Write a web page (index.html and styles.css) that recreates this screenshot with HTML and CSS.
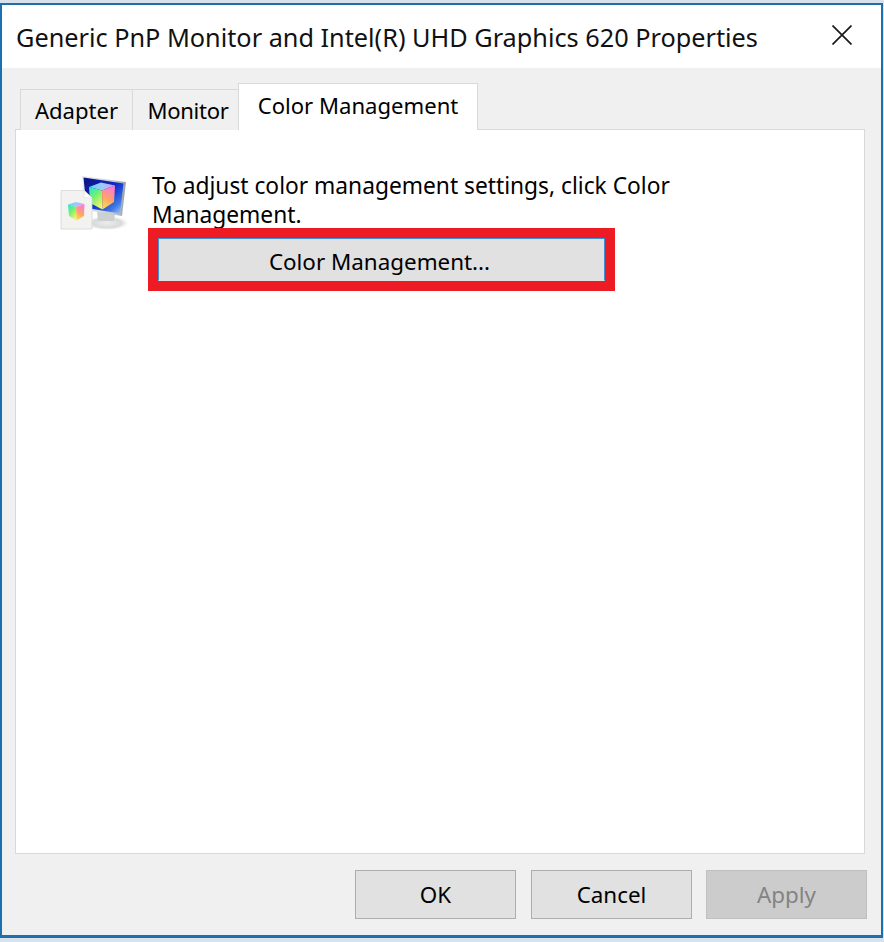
FILE: index.html
```html
<!DOCTYPE html>
<html lang="en">
<head>
<meta charset="utf-8">
<title>Properties</title>
<link rel="stylesheet" href="styles.css">
</head>
<body>
<div class="window">
  <header class="titlebar">
    <span class="title">Generic PnP Monitor and Intel(R) UHD Graphics 620 Properties</span>
    <svg class="close" width="20" height="20" viewBox="0 0 20 20"><path d="M0.5 0.5 L19.5 19.5 M19.5 0.5 L0.5 19.5" stroke="#1a1a1a" stroke-width="1.7" fill="none"/></svg>
  </header>
  <main class="body">
    <div class="tabs">
      <div class="tab tab-first">Adapter</div>
      <div class="tab tab-second">Monitor</div>
      <div class="tab tab-active">Color Management</div>
    </div>
    <section class="panel">
      <svg class="icon" width="68" height="58" viewBox="0 0 68 58">
        <defs>
          <linearGradient id="screen" x1="0" y1="0" x2="1" y2="1">
            <stop offset="0" stop-color="#08127e"/>
            <stop offset="0.5" stop-color="#0a2cc8"/>
            <stop offset="0.8" stop-color="#3f78e6"/>
            <stop offset="1" stop-color="#b4d2f6"/>
          </linearGradient>
          <linearGradient id="bezel" x1="0" y1="0" x2="1" y2="0">
            <stop offset="0" stop-color="#e8ebf0"/>
            <stop offset="0.7" stop-color="#c4cad2"/>
            <stop offset="1" stop-color="#98a2ac"/>
          </linearGradient>
          <linearGradient id="left" x1="0.1" y1="0" x2="0.7" y2="1">
            <stop offset="0" stop-color="#2ce6d0"/>
            <stop offset="0.45" stop-color="#74f070"/>
            <stop offset="1" stop-color="#fdf468"/>
          </linearGradient>
          <linearGradient id="right" x1="0.6" y1="0" x2="0.3" y2="1">
            <stop offset="0" stop-color="#ff78d8"/>
            <stop offset="0.55" stop-color="#ffa468"/>
            <stop offset="1" stop-color="#fbdc50"/>
          </linearGradient>
          <linearGradient id="top" x1="0" y1="0" x2="1" y2="0">
            <stop offset="0" stop-color="#58d8f0"/>
            <stop offset="0.5" stop-color="#a0c8fa"/>
            <stop offset="1" stop-color="#d89cf0"/>
          </linearGradient>
          <radialGradient id="base" cx="0.5" cy="0.5" r="0.5">
            <stop offset="0" stop-color="#eceeee"/>
            <stop offset="0.7" stop-color="#d8dada"/>
            <stop offset="1" stop-color="#eeeeee" stop-opacity="0.2"/>
          </radialGradient>
          <filter id="soft" x="-5%" y="-5%" width="110%" height="110%"><feGaussianBlur stdDeviation="0.55"/></filter>
        </defs>
        <g filter="url(#soft)">
          <ellipse cx="47" cy="48" rx="21" ry="7" fill="url(#base)"/>
          <path d="M37 36 L55 39 L54 46 L38 46 Z" fill="#cdd0d0"/>
          <path d="M22 1 L66 7 L62 41 L25 35 Z" fill="url(#bezel)"/>
          <path d="M23.5 2.5 L63.5 8.5 L60 38.5 L26.5 33 Z" fill="url(#screen)"/>
          <path d="M29 12 L41 7.5 L55 10.5 L42 15.5 Z" fill="url(#top)"/>
          <path d="M29 12 L42 15.5 L42.5 34.5 L30 28 Z" fill="url(#left)"/>
          <path d="M42 15.5 L55 10.5 L54 27 L42.5 34.5 Z" fill="url(#right)"/>
          <path d="M1 15.5 L24 15.5 L32 23 L32 54 L1 54 Z" fill="#f2f2f0" stroke="#d6d6d4" stroke-width="0.8"/>
          <path d="M24 15.5 L24 23 L32 23 Z" fill="#fcfcfc" stroke="#dcdcda" stroke-width="0.6"/>
          <path d="M8 29.5 L16 27 L24.5 29 L16 32 Z" fill="url(#top)"/>
          <path d="M8 29.5 L16 32 L16.5 45.5 L9 41 Z" fill="url(#left)"/>
          <path d="M16 32 L24.5 29 L24 41 L16.5 45.5 Z" fill="url(#right)"/>
        </g>
      </svg>
      <div class="content">
        <p class="desc">To adjust color management settings, click Color Management.</p>
        <div class="highlight">
          <button class="btn btn-focus" type="button">Color Management...</button>
        </div>
      </div>
    </section>
    <footer class="actions">
      <button class="btn btn-action" type="button">OK</button>
      <button class="btn btn-action" type="button">Cancel</button>
      <button class="btn btn-action btn-disabled" type="button">Apply</button>
    </footer>
  </main>
</div>
</body>
</html>
```

FILE: styles.css
```css
* { box-sizing: border-box; }

html, body {
  margin: 0;
  height: 100%;
}

body {
  background: #d9e2ea;
  padding-top: 3px;
  font-family: "Noto Sans", "Open Sans", sans-serif;
  color: #000;
  overflow: hidden;
}

.window {
  width: 883px;
  height: 935px;
  border: solid #1d6fae;
  border-width: 2px 2px 3px 2px;
  display: flex;
  flex-direction: column;
  background: #f0f0f0;
}

.titlebar {
  height: 63px;
  flex: none;
  background: #fff;
  display: flex;
  align-items: center;
  justify-content: space-between;
  padding: 0 29px 0 15px;
}

.title {
  font-size: 25.27px;
  margin-left: -1px;
  white-space: nowrap;
  color: #111;
}

.close { display: block; margin-top: -3px; }

.body {
  flex: 1;
  display: flex;
  flex-direction: column;
  padding: 15px 14px 0 13px;
  min-height: 0;
}

.tabs {
  display: flex;
  align-items: flex-end;
  height: 47px;
  padding-left: 5px;
  margin-bottom: -1px;
  position: relative;
  z-index: 1;
}

.tab {
  height: 41px;
  width: 106px;
  display: flex;
  align-items: center;
  justify-content: center;
  font-size: 22.1px;
  background: #f0f0f0;
  border: 1px solid #d9d9d9;
  border-left: 0;
  border-bottom: 0;
}

.tab-first {
  width: 113px;
  border-left: 1px solid #d9d9d9;
}

.tab-second {
  padding-left: 5px;
  letter-spacing: -0.3px;
}

.tab-active {
  width: 240px;
  height: 47px;
  margin-left: -1px;
  background: #fff;
  border-left: 1px solid #d9d9d9;
  padding-bottom: 4px;
}

.panel {
  width: 850px;
  height: 725px;
  background: #fff;
  border: 1px solid #d9d9d9;
  display: flex;
  align-items: flex-start;
  padding: 45px 0 0 44px;
  flex: none;
}

.icon {
  display: block;
  flex: none;
}

.content {
  margin-left: 24px;
  width: 540px;
  margin-top: -3px;
}

.desc {
  margin: -1px 0 0;
  font-size: 22.75px;
  line-height: 29px;
  width: 525px;
}

.highlight {
  width: 467px;
  height: 63px;
  margin: -1px 0 0 -4px;
  border: 10px solid #ed1c24;
  position: relative;
}

.btn {
  font-family: inherit;
  font-size: 22.4px;
  color: #000;
  background: #e1e1e1;
  border: 1px solid #adadad;
  padding: 0;
  margin: 0;
  display: flex;
  align-items: center;
  justify-content: center;
}

.btn-focus {
  width: 100%;
  height: 100%;
  padding: 3px 4px 0 0;
  border-color: #3f8fd6;
  border-bottom-color: #e1e1e1;
}

.actions {
  display: flex;
  padding-top: 16px;
  justify-content: flex-end;
}

.btn-action {
  width: 161px;
  height: 49px;
  margin-left: 15px;
}

.btn-disabled {
  background: #cccccc;
  border-color: #bfbfbf;
  color: #838383;
  margin-left: 14px;
}
```
